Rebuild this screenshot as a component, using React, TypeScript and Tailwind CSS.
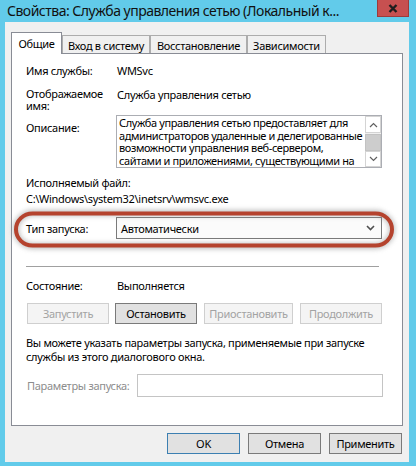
const labelCol = "w-[91px] shrink-0";

function Btn({
  children,
  w,
  disabled,
  primary,
  className = "",
}: {
  children: React.ReactNode;
  w: string;
  disabled?: boolean;
  primary?: boolean;
  className?: string;
}) {
  const tone = disabled
    ? "bg-[#f4f4f4] border-[#cfcfcf] text-[#a3a3a3]"
    : primary
      ? "bg-[#e1e1e1] border-[#3c7fb1] text-black"
      : "bg-[#e1e1e1] border-[#7a7a7a] text-black";
  return (
    <div
      className={`${w} h-[21px] border ${tone} flex items-center justify-center leading-[15px] ${className}`}
    >
      {children}
    </div>
  );
}

function Chevron({ up }: { up?: boolean }) {
  return (
    <svg width="9" height="6" viewBox="0 0 9 6">
      <path
        d={up ? "M1 5 L4.5 1.5 L8 5" : "M1 1 L4.5 4.5 L8 1"}
        fill="none"
        stroke="#606060"
        strokeWidth="1.2"
      />
    </svg>
  );
}

export default function App() {
  return (
    <div className="relative w-[416px] h-[466px] overflow-hidden bg-[#62cbea] pl-[5px] pr-[7px] pb-[4px] flex flex-col font-['Noto_Sans',sans-serif] text-[11px] tracking-[-0.3px] text-black">
      {/* title bar */}
      <div className="h-[22px] shrink-0 flex items-start">
        <div className="pl-[2px] pt-px text-[14px] tracking-[-0.5px] leading-[20px] text-[#111] whitespace-nowrap">
          Свойства: Служба управления сетью (Локальный к...
        </div>
        <div className="ml-auto w-[32px] h-[17px] bg-[#c75050] border border-t-0 border-[#9c3b3b] flex items-center justify-center">
          <svg width="10" height="9" viewBox="0 0 10 9">
            <path d="M1.5 1 L8.5 8 M8.5 1 L1.5 8" stroke="#1e1e1e" strokeWidth="2.4" />
          </svg>
        </div>
      </div>

      {/* client area */}
      <div className="flex-1 bg-[#f0f0f0] flex flex-col">
        {/* tabs */}
        <div className="h-[31px] pl-[6px] flex items-end shrink-0">
          <div className="relative z-10 -mb-px w-[51px] h-[22px] bg-white border-l border-t border-r border-[#898c95] flex items-center justify-center leading-[15px]">
            Общие
          </div>
          <div className="w-[88px] h-[18px] bg-[#f0f0f0] border-l border-t border-r border-[#acacac] flex items-center justify-center pt-px leading-[15px]">
            Вход в систему
          </div>
          <div className="w-[97px] h-[18px] bg-[#f0f0f0] border-l border-t border-r border-[#acacac] flex items-center justify-center pt-px leading-[15px]">
            Восстановление
          </div>
          <div className="w-[79px] h-[18px] bg-[#f0f0f0] border-l border-t border-r border-[#acacac] flex items-center justify-center pt-px leading-[15px]">
            Зависимости
          </div>
        </div>

        {/* tab page */}
        <div className="ml-[6px] w-[392px] h-[373px] shrink-0 bg-white border border-[#898c95] pl-[14px] pt-[9px] flex flex-col leading-[15px]">
          <div className="flex">
            <div className={labelCol}>Имя службы:</div>
            <div>WMSvc</div>
          </div>

          <div className="flex mt-[10px]">
            <div className={`${labelCol} leading-[12px]`}>
              Отображаемое
              <br />
              имя:
            </div>
            <div className="-mt-[1px]">Служба управления сетью</div>
          </div>

          <div className="flex mt-[3px]">
            <div className="w-[90px] shrink-0 pt-[5px]">Описание:</div>
            <div className="w-[266px] h-[53px] border border-[#abadb3] flex">
              <div className="flex-1 pl-[2px] pt-px leading-[12.5px] tracking-[-0.4px] whitespace-nowrap overflow-hidden">
                Служба управления сетью предоставляет для
                <br />
                администраторов удаленные и делегированные
                <br />
                возможности управления веб-сервером,
                <br />
                сайтами и приложениями, существующими на
              </div>
              <div className="w-[16px] flex flex-col bg-[#f0f0f0]">
                <div className="h-[17px] bg-white border border-[#d4d4d4] flex items-center justify-center">
                  <Chevron up />
                </div>
                <div className="h-[17px] mt-px bg-[#cdcdcd] border border-[#c2c2c2]" />
                <div className="flex-1" />
                <div className="h-[16px] bg-white border border-[#d4d4d4] flex items-center justify-center">
                  <Chevron />
                </div>
              </div>
            </div>
          </div>

          <div className="mt-[7px]">Исполняемый файл:</div>
          <div className="mt-px">C:\Windows\system32\inetsrv\wmsvc.exe</div>

          <div className="flex items-center mt-[11px]">
            <div className="w-[90px] shrink-0 pt-[1px]">Тип запуска:</div>
            <div className="w-[266px] h-[22px] border border-[#7a7a7a] bg-[#fbfbfb] flex items-center pl-[4px] pr-[6px]">
              <div className="flex-1">Автоматически</div>
              <svg width="9" height="6" viewBox="0 0 9 6">
                <path d="M1 1 L4.5 4.5 L8 1" fill="none" stroke="#505050" strokeWidth="1.6" />
              </svg>
            </div>
          </div>

          <div className="mt-[27px] w-[353px] h-px bg-[#a0a0a0]" />

          <div className="flex mt-[11px]">
            <div className={labelCol}>Состояние:</div>
            <div>Выполняется</div>
          </div>

          <div className="flex mt-[10px] ml-[1px]">
            <Btn w="w-[82px]" disabled>
              Запустить
            </Btn>
            <Btn w="w-[82px]" className="ml-[6px]">
              Остановить
            </Btn>
            <Btn w="w-[89px]" disabled className="ml-[7px]">
              Приостановить
            </Btn>
            <Btn w="w-[82px]" disabled className="ml-[7px]">
              Продолжить
            </Btn>
          </div>

          <div className="mt-[12px] leading-[14px] whitespace-nowrap">
            Вы можете указать параметры запуска, применяемые при запуске
            <br />
            службы из этого диалогового окна.
          </div>

          <div className="flex items-center mt-[10px] ml-[1px]">
            <div className="w-[110px] shrink-0 text-[#8d8d8d] whitespace-nowrap">Параметры запуска:</div>
            <div className="w-[246px] h-[23px] border border-[#c4c4c4] bg-white" />
          </div>
        </div>

        {/* dialog buttons */}
        <div className="mt-[7px] pr-[7px] flex justify-end gap-[8px]">
          <Btn w="w-[73px]" primary>
            OK
          </Btn>
          <Btn w="w-[73px]">Отмена</Btn>
          <Btn w="w-[73px]">Применить</Btn>
        </div>
      </div>

      {/* hand-drawn red highlight around the startup type row */}
      <svg
        className="absolute left-0 top-0 pointer-events-none"
        width="416"
        height="466"
        viewBox="0 0 416 466"
      >
        <defs>
          <filter id="blur" x="-10%" y="-50%" width="120%" height="200%">
            <feGaussianBlur stdDeviation="2.5" />
          </filter>
        </defs>
        <rect
          x="16"
          y="213"
          width="376"
          height="33"
          rx="17"
          fill="none"
          stroke="#8a8a8a"
          strokeWidth="6"
          opacity="0.55"
          filter="url(#blur)"
        />
        <rect
          x="16"
          y="213.5"
          width="376"
          height="32"
          rx="16.5"
          fill="none"
          stroke="#b5432e"
          strokeWidth="4"
        />
      </svg>
    </div>
  );
}
